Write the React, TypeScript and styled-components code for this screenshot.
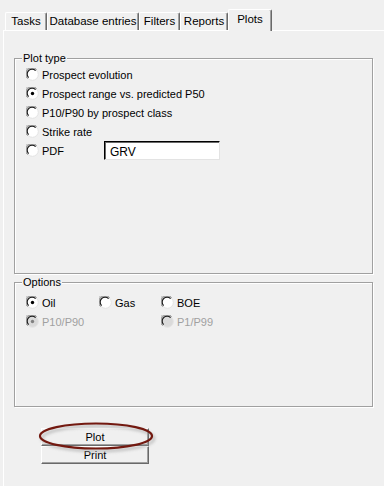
import React from 'react';
import styled, { createGlobalStyle } from 'styled-components';

const Global = createGlobalStyle`
    html, body {
        margin: 0;
        padding: 0;
        background: #f0f0f0;
    }
    body {
        font-family: "Liberation Sans", Arial, sans-serif;
        font-size: 11px;
        color: #000;
    }
`

const Page = styled.div`
    width: 384px;
    height: 486px;
    overflow: hidden;
    padding: 9px 0 0 3px;
    box-sizing: border-box;
`

const TabRow = styled.div`
    display: flex;
    align-items: flex-end;
    padding-left: 2px;
    height: 21px;
`

const Tab = styled.div<{ $w: number; $active?: boolean }>`
    width: ${p => p.$w}px;
    height: ${p => (p.$active ? 22 : 18)}px;
    box-sizing: border-box;
    border-top: 1px solid #fff;
    border-left: 1px solid #fff;
    border-right: 1px solid #696969;
    box-shadow: inset -1px 0 0 #a0a0a0;
    border-radius: 2px 2px 0 0;
    background: #f0f0f0;
    font-size: 11.5px;
    white-space: nowrap;
    line-height: ${p => (p.$active ? 18 : 17)}px;
    text-align: center;
    position: ${p => (p.$active ? 'relative' : 'static')};
    z-index: ${p => (p.$active ? 2 : 0)};
    margin-bottom: ${p => (p.$active ? -1 : 0)}px;
`

const Panel = styled.div`
    border-top: 1px solid #fff;
    border-left: 1px solid #fff;
    padding: 27px 0 0 10px;
    height: 460px;
    box-sizing: border-box;
`

const Group = styled.div<{ $h: number; $gap?: number }>`
    width: 359px;
    height: ${p => p.$h}px;
    box-sizing: border-box;
    border: 1px solid #a0a0a0;
    box-shadow: inset 1px 1px 0 #fff, 1px 1px 0 #fff;
    margin-top: ${p => p.$gap || 0}px;
`

const Title = styled.div`
    width: fit-content;
    height: 13px;
    line-height: 13px;
    margin: -7px 0 0 7px;
    padding: 0 1px;
    background: #f0f0f0;
`

const List = styled.div<{ $top?: number }>`
    padding: ${p => p.$top || 0}px 0 0 11px;
`

const Row = styled.div`
    height: 19px;
    display: flex;
    align-items: center;
`

const OptionRow = styled.div`
    height: 19px;
    display: grid;
    grid-template-columns: 73px 62px auto;
    align-items: center;
`

const Choice = styled.label<{ $disabled?: boolean; $w?: number }>`
    display: flex;
    align-items: center;
    gap: 3px;
    width: ${p => (p.$w ? `${p.$w}px` : 'auto')};
    color: ${p => (p.$disabled ? '#a0a0a0' : '#000')};
`

const TextBox = styled.div`
    width: 116px;
    height: 19px;
    box-sizing: border-box;
    margin-left: 39px;
    border-top: 1px solid #000;
    border-left: 1px solid #000;
    border-right: 1px solid #e3e3e3;
    border-bottom: 1px solid #e3e3e3;
    box-shadow: inset 1px 1px 0 #696969;
    background: #fff;
    padding: 3px 0 0 5px;
    font-size: 12px;
`

const Buttons = styled.div`
    position: relative;
    width: 108px;
    margin: 21px 0 0 27px;
`

const Button = styled.div`
    height: 18px;
    box-sizing: border-box;
    border-top: 1px solid #fff;
    border-left: 1px solid #fff;
    border-right: 1px solid #696969;
    border-bottom: 1px solid #696969;
    box-shadow: inset -1px -1px 0 #a0a0a0;
    background: #f0f0f0;
    text-align: center;
    line-height: 16px;
    font-size: 11px;
`

const Ring = styled.svg`
    position: absolute;
    left: -4px;
    top: -7px;
    pointer-events: none;
`

function Radio({ checked, disabled }: { checked?: boolean; disabled?: boolean }) {
    const fill = disabled ? '#dadada' : '#fff';
    return (
        <svg width="13" height="13" viewBox="0 0 13 13">
            <path d="M0 0 H4.5 A6.5 6.5 0 0 0 0 4.5 Z" fill="#cdcdcd" />
            <circle cx="6.5" cy="6.5" r="5.8" fill={fill} stroke="#e4e4e4" />
            <path d="M1.6 10.6 A5.8 5.8 0 0 1 10.6 1.6" fill="none" stroke="#808080" />
            <path d="M2.6 9.6 A4.7 4.7 0 0 1 9.6 2.6" fill="none" stroke="#1a1a1a" strokeWidth="1.2" />
            {checked && <circle cx="6.5" cy="6.5" r="1.7" fill={disabled ? '#808080' : '#000'} />}
        </svg>
    );
}

export default function App() {
    return (
        <Page>
            <Global />
            <TabRow>
                <Tab $w={42}>Tasks</Tab>
                <Tab $w={92}>Database entries</Tab>
                <Tab $w={41}>Filters</Tab>
                <Tab $w={48}>Reports</Tab>
                <Tab $w={44} $active>Plots</Tab>
            </TabRow>
            <Panel>
                <Group $h={216}>
                    <Title>Plot type</Title>
                    <List>
                        <Row><Choice><Radio />Prospect evolution</Choice></Row>
                        <Row><Choice><Radio checked />Prospect range vs. predicted P50</Choice></Row>
                        <Row><Choice><Radio />P10/P90 by prospect class</Choice></Row>
                        <Row><Choice><Radio />Strike rate</Choice></Row>
                        <Row>
                            <Choice $w={39}><Radio />PDF</Choice>
                            <TextBox>GRV</TextBox>
                        </Row>
                    </List>
                </Group>
                <Group $h={125} $gap={8}>
                    <Title>Options</Title>
                    <List $top={4}>
                        <OptionRow>
                            <Choice><Radio checked />Oil</Choice>
                            <Choice><Radio />Gas</Choice>
                            <Choice><Radio />BOE</Choice>
                        </OptionRow>
                        <OptionRow>
                            <Choice $disabled><Radio checked disabled />P10/P90</Choice>
                            <span />
                            <Choice $disabled><Radio disabled />P1/P99</Choice>
                        </OptionRow>
                    </List>
                </Group>
                <Buttons>
                    <Button>Plot</Button>
                    <Button>Print</Button>
                    <Ring width="122" height="34" viewBox="0 0 122 34">
                        <defs>
                            <filter id="blur" x="-10%" y="-30%" width="120%" height="160%">
                                <feGaussianBlur stdDeviation="1.5" />
                            </filter>
                        </defs>
                        <ellipse cx="61" cy="17.5" rx="56" ry="12.5" fill="none" stroke="#9a9a9a" strokeWidth="2.5" opacity="0.6" filter="url(#blur)" />
                        <ellipse cx="59" cy="15" rx="56" ry="12.5" fill="none" stroke="#731910" strokeWidth="2.2" />
                    </Ring>
                </Buttons>
            </Panel>
        </Page>
    );
}
